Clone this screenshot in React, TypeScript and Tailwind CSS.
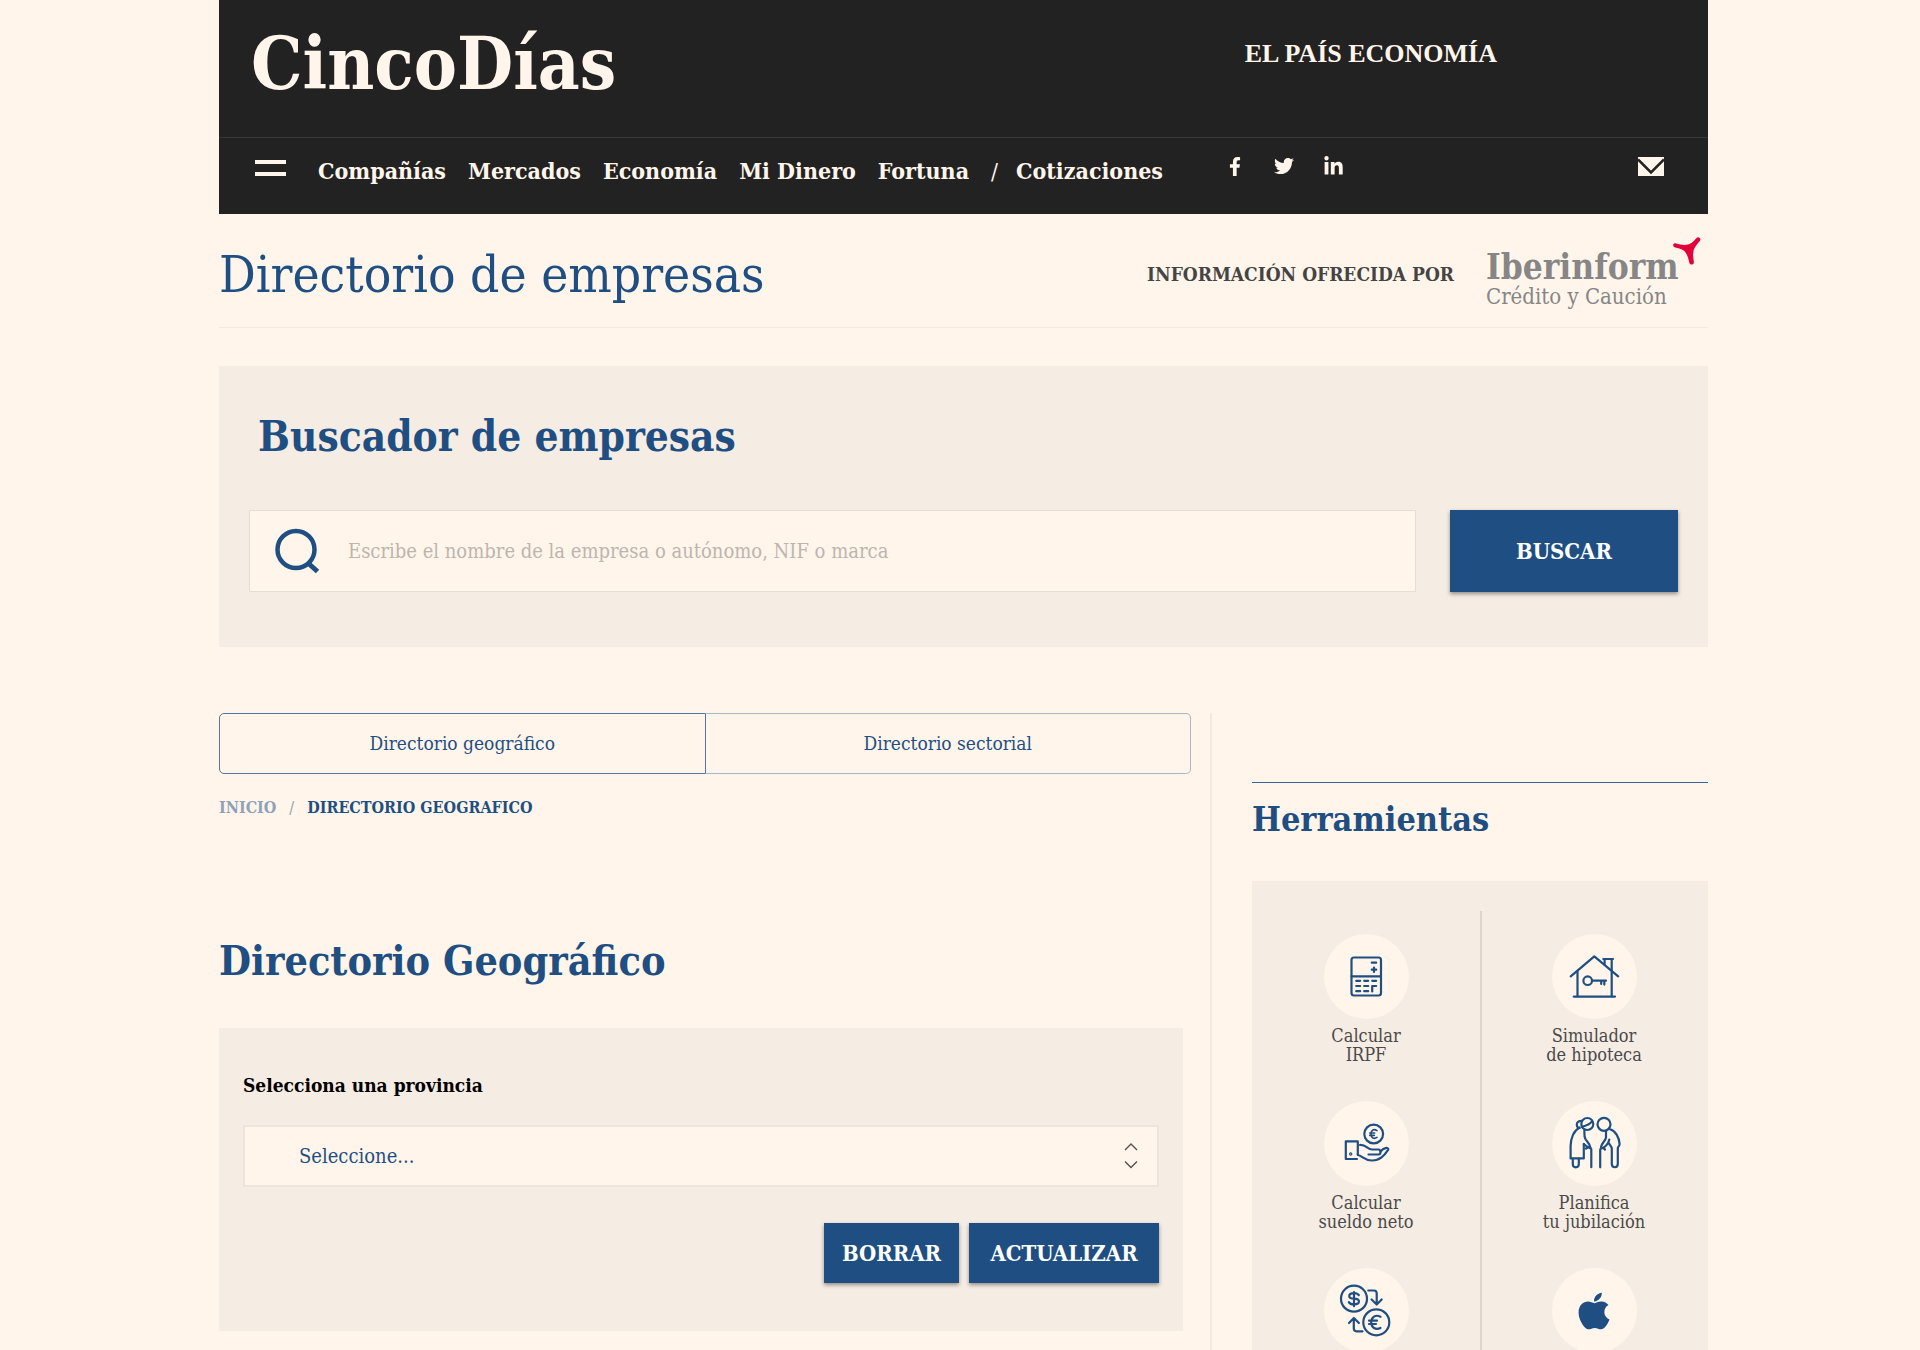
import type { ReactNode } from "react";
import { FaApple, FaFacebookF, FaLinkedinIn, FaTwitter } from "react-icons/fa";

const NAV = ["Compañías", "Mercados", "Economía", "Mi Dinero", "Fortuna"];

const SOCIAL = [
  { name: "Facebook", icon: <FaFacebookF className="h-[19px] w-5" /> },
  { name: "Twitter", icon: <FaTwitter className="size-5" /> },
  { name: "LinkedIn", icon: <FaLinkedinIn className="size-[21px]" /> },
];

function ToolSvg({ children }: { children: ReactNode }) {
  return (
    <svg
      viewBox="0 0 85 85"
      className="size-[85px]"
      fill="none"
      stroke="currentColor"
      strokeWidth="2.2"
      strokeLinecap="round"
      strokeLinejoin="round"
      aria-hidden="true"
    >
      {children}
    </svg>
  );
}

function CalculatorIcon() {
  return (
    <ToolSvg>
      <rect x="27.5" y="23.5" width="29.5" height="38" rx="2.5" />
      <path d="M27.5 42.3H57" />
      <path d="M47.8 28.7h4.4M47.8 35.7h4.4M50 33.5v4.4" />
      <path d="M32.2 46.8h4M40.2 46.8h4M48.2 46.8h4M32.2 52h4M40.2 52h4M32.2 57.2h4M40.2 57.2h4M48.2 57.4V52h4" />
    </ToolSvg>
  );
}

function HouseIcon() {
  return (
    <ToolSvg>
      <path d="M18.7 42.4 42.3 22.3 66.2 42.4" />
      <path d="M25.5 37.5v25M59.7 25v37.500M21.7 62.6H63M51.3 25h9.7M52.6 25v5.5" />
      <circle cx="35.7" cy="46.7" r="4.3" />
      <path d="M40 46.7h14M49.2 47v3M52.3 47v3.6" />
    </ToolSvg>
  );
}

function HandIcon() {
  return (
    <ToolSvg>
      <path d="M33 58H21.8V40.4h12v13.4" />
      <circle cx="26.7" cy="53" r=".6" />
      <circle cx="49.7" cy="33" r="9.4" />
      <path d="M53 29.6c-3-2-6-.8-6 3.4s3 5.4 6 3.4M45.7 32h5M45.7 34.4h4.6" strokeWidth="1.6" />
      <path d="M36 44c6-.5 7.5 4.5 12 4.5h6.5c2.8 0 2.6 5 0 5H44.5" />
      <path d="M56.5 50.5c3-3.5 8-5 7.8-1.8C60 55 56 59.5 48 59.5S38 54.5 33.8 54" />
    </ToolSvg>
  );
}

function CoupleIcon() {
  return (
    <ToolSvg>
      <circle cx="35.3" cy="23" r="6" />
      <path d="M30 19.8c-3.500 0-5.400 1.500-5.200 4.200.1 2 1.500 3 3 3M30 25.800c4-1 8-2 10-5.500M27.500 26.500C22 29.500 18.600 37 18.600 45v12.400h13.200V43" />
      <path d="M20.8 57.5v5.800c0 4 6 4 6 0v-5.800M32.400 29c0 4-.4 6.500 1 9s4.800 4.800 5 8.600M31.800 43c1.500 1.500 3 2.500 6 4M34 47.500c2-1.500 5.300-1.500 5.300 1.200v17.500" />
      <circle cx="52" cy="23.3" r="6.5" />
      <path d="M58 28.300c5.500 1.500 9 8 9.600 14.500.2 2.500-1.800 2.500-1.800 4.500v15.500c0 4.600-6 4.600-6 0V47.500c0-2-2-3.500-3-5.500M54 30v6.500c-.5 3.500-4 5-5 9.500M57.300 38.500c-1 4-3 6.500-6 8.300M53 48.500c-1.500-2-4.800-1.800-4.800.8v17" />
    </ToolSvg>
  );
}

function CurrencyIcon() {
  return (
    <ToolSvg>
      <circle cx="30" cy="30.7" r="13" />
      <circle cx="52.3" cy="54.3" r="13" />
      <path d="M44.3 22.500H50c2 0 2.700.8 2.700 2.700V36M47.600 31.500l5.100 5 5-5M38.500 63.300h-6c-2 0-2.700-.8-2.700-2.700V50.500M25 55l4.900-5 5 5" />
      <path d="M34.8 27.200c-1-1.600-2.600-2-4.800-2-6.300 0-6.300 5.400 0 5.500 6.600.1 6.600 5.700 0 5.700-2.500 0-4.200-.6-5.200-2.300M30 24v14.200" />
      <path d="M56.5 48.700c-5-2.500-9.300.5-9.300 5.600s4.300 8.100 9.300 5.600M45 52.700h8M45 56h7" />
    </ToolSvg>
  );
}

const TOOLS = [
  { name: "Calcular IRPF", lines: ["Calcular", "IRPF"], icon: <CalculatorIcon /> },
  { name: "Simulador de hipoteca", lines: ["Simulador", "de hipoteca"], icon: <HouseIcon /> },
  { name: "Calcular sueldo neto", lines: ["Calcular", "sueldo neto"], icon: <HandIcon /> },
  { name: "Planifica tu jubilación", lines: ["Planifica", "tu jubilación"], icon: <CoupleIcon /> },
  { name: "Divisas", lines: [], icon: <CurrencyIcon /> },
  { name: "Apple", lines: [], icon: <FaApple className="size-[42px]" /> },
];

function Header() {
  return (
    <header className="bg-[#222222] text-[#fff5eb]">
      <div className="flex h-[137px] items-start justify-between pl-8 pr-[211px]">
        <a href="#" className="mt-5 text-[72px] leading-[88px] font-bold">
          CincoDías
        </a>
        <a href="#" className="mt-9 font-['Liberation_Serif',serif] text-[26px] leading-9 font-bold">
          EL PAÍS ECONOMÍA
        </a>
      </div>
      <div className="flex h-[77px] items-start border-t border-[#363636] pl-9">
        <button type="button" aria-label="Menú" className="mt-[22px] flex w-[31px] flex-col gap-2">
          <span className="h-1 bg-[#fff5eb]" />
          <span className="h-1 bg-[#fff5eb]" />
        </button>
        <nav className="mt-[17px] ml-8 flex gap-[22px] text-[23px] leading-8 font-bold whitespace-nowrap">
          {NAV.map((item) => (
            <a key={item} href="#">
              {item}
            </a>
          ))}
          <span className="font-normal">/</span>
          <a href="#" className="-ml-1">
            Cotizaciones
          </a>
        </nav>
        <div className="mt-[18px] ml-[62px] flex gap-[29px]">
          {SOCIAL.map((s) => (
            <a key={s.name} href="#" aria-label={s.name} className="flex h-5 items-center">
              {s.icon}
            </a>
          ))}
        </div>
        <a href="#" aria-label="Correo" className="mt-[19px] mr-11 ml-auto">
          <svg viewBox="0 0 26 19" className="h-[19px] w-[26px]" aria-hidden="true">
            <rect width="26" height="19" fill="#fff5eb" />
            <path d="M0 2.5 13 15.500 26 2.500" fill="none" stroke="#222222" strokeWidth="2.500" />
          </svg>
        </a>
      </div>
    </header>
  );
}

function TitleBar() {
  return (
    <div className="flex h-[114px] items-center justify-between border-b border-[#f3e9df] pt-2">
      <h1 className="text-[51px] leading-[60px] text-[#1f4f82]">Directorio de empresas</h1>
      <div className="flex items-center">
        <p className="text-[19px] font-bold text-[#444444]">INFORMACIÓN OFRECIDA POR</p>
        <a href="#" className="relative ml-8 w-[222px] text-[#868686]">
          <span className="block pt-2 text-[35px] leading-9 font-bold">Iberinform</span>
          <span className="block text-[22px] leading-6">Crédito y Caución</span>
          <svg viewBox="0 0 28 28" className="absolute -top-1 right-[7px] size-7" aria-hidden="true">
            <path
              d="M2.3 6.300C1 6 0 7.300.2 8.700c.3 1.300 1.500 1.600 3 2 7 1.700 10 2.500 12.500 12.500.4 2 .9 4.300 2.800 4.300 1.700 0 2.700-1.200 2.300-3.200C19 15 20.500 11 25.500 5.500c1.500-1.600 2.700-3 1.200-4.600-1.500-1.500-3-.4-4.200 1.200C17 9 12 9 2.300 6.300Z"
              fill="#e4003a"
            />
          </svg>
        </a>
      </div>
    </div>
  );
}

function SearchPanel() {
  return (
    <section className="mt-[38px] h-[281px] bg-[#f5ece3] px-[30px] pt-[43px]">
      <h2 className="pl-[9px] text-[42px] leading-[56px] font-bold text-[#1f4f82]">Buscador de empresas</h2>
      <form className="mt-[45px] flex gap-[34px]" onSubmit={(e) => e.preventDefault()}>
        <label className="flex h-[82px] flex-1 items-center border border-[#e8ddd3] bg-[#fff5eb] pl-[25px]">
          <svg viewBox="0 0 46 46" className="size-[46px] shrink-0 text-[#1f4f82]" aria-hidden="true">
            <circle cx="21" cy="21.5" r="18.5" fill="none" stroke="currentColor" strokeWidth="4.5" />
            <path d="m33 35 9.500 8.500" stroke="currentColor" strokeWidth="5" />
          </svg>
          <input
            type="text"
            aria-label="Nombre de la empresa"
            placeholder="Escribe el nombre de la empresa o autónomo, NIF o marca"
            className="ml-[27px] h-full flex-1 bg-transparent text-[20px] text-[#1f4f82] outline-none placeholder:text-[#bdb5ae]"
          />
        </label>
        <button
          type="submit"
          className="h-[82px] w-[228px] bg-[#1f4f82] text-[22px] font-bold text-white shadow-[0_2px_4px_rgba(0,0,0,0.4)]"
        >
          BUSCAR
        </button>
      </form>
    </section>
  );
}

function Directory() {
  return (
    <main className="flex-1 pr-[19px]">
      <div className="flex h-[61px] text-[19px] text-[#1f4f82]">
        <button type="button" className="flex-1 rounded-l-[5px] border border-[#5277a0]">
          Directorio geográfico
        </button>
        <button type="button" className="flex-1 rounded-r-[5px] border border-l-0 border-[#a9b7c6]">
          Directorio sectorial
        </button>
      </div>
      <nav aria-label="Ruta" className="mt-[22px] flex text-[16px] leading-6 font-bold text-[#1f4f82]">
        <a href="#" className="text-[#8fa2b8]">
          INICIO
        </a>
        <span className="mx-[13px] font-normal text-[#8fa2b8]">/</span>
        <span>DIRECTORIO GEOGRAFICO</span>
      </nav>
      <h2 className="mt-[113px] text-[41px] leading-[56px] font-bold text-[#1f4f82]">Directorio Geográfico</h2>
      <form
        className="mt-[39px] mr-2 bg-[#f5ece3] px-6 pt-[42px] pb-12"
        onSubmit={(e) => e.preventDefault()}
      >
        <label htmlFor="provincia" className="block text-[19px] leading-[30px] font-bold text-black">
          Selecciona una provincia
        </label>
        <div className="relative mt-[25px]">
          <select
            id="provincia"
            className="h-[62px] w-full appearance-none rounded-none border-2 border-[#efe4da] bg-[#fff5eb] pl-[54px] text-[20px] text-[#1f4f82] outline-none"
          >
            <option>Seleccione...</option>
          </select>
          <svg
            viewBox="0 0 14 26"
            className="pointer-events-none absolute top-[18px] right-[21px] h-[26px] w-[14px]"
            fill="none"
            stroke="#55524f"
            strokeWidth="1.4"
            aria-hidden="true"
          >
            <path d="M1 7 7 1l6 6M1 18.500l6 6 6-6" />
          </svg>
        </div>
        <div className="mt-9 flex justify-end gap-[10px] text-[22px] font-bold text-white">
          <button type="reset" className="h-[60px] w-[135px] bg-[#1f4f82] shadow-[0_2px_4px_rgba(0,0,0,0.4)]">
            BORRAR
          </button>
          <button type="submit" className="h-[60px] w-[190px] bg-[#1f4f82] shadow-[0_2px_4px_rgba(0,0,0,0.4)]">
            ACTUALIZAR
          </button>
        </div>
      </form>
    </main>
  );
}

function Tools() {
  return (
    <aside className="w-[498px] shrink-0 border-l-2 border-[#f3e9df] pt-[69px] pl-10">
      <h2 className="border-t border-[#3a659a] pt-[14px] text-[34px] leading-[44px] font-bold text-[#1f4f82]">
        Herramientas
      </h2>
      <div className="relative mt-10 grid grid-cols-2 gap-y-9 bg-[#f5ece3] pt-[53px] pb-12">
        <span className="absolute top-[30px] bottom-[30px] left-1/2 w-[2px] bg-[#dfd5cb]" />
        {TOOLS.map((tool) => (
          <a
            key={tool.name}
            href="#"
            aria-label={tool.name}
            className="flex h-[131px] flex-col items-center text-[18px] leading-[19px] text-[#4a4a4a]"
          >
            <span className="mb-[7px] flex size-[85px] items-center justify-center rounded-full bg-[#fff5eb] text-[#1f4f82]">
              {tool.icon}
            </span>
            {tool.lines.map((line) => (
              <span key={line}>{line}</span>
            ))}
          </a>
        ))}
      </div>
    </aside>
  );
}

export default function App() {
  return (
    <div className="h-screen overflow-hidden bg-[#fff5eb] pr-[212px] pl-[219px] font-['DejaVu_Serif_Condensed','DejaVu_Serif',serif]">
      <Header />
      <TitleBar />
      <SearchPanel />
      <div className="mt-[66px] flex">
        <Directory />
        <Tools />
      </div>
    </div>
  );
}
